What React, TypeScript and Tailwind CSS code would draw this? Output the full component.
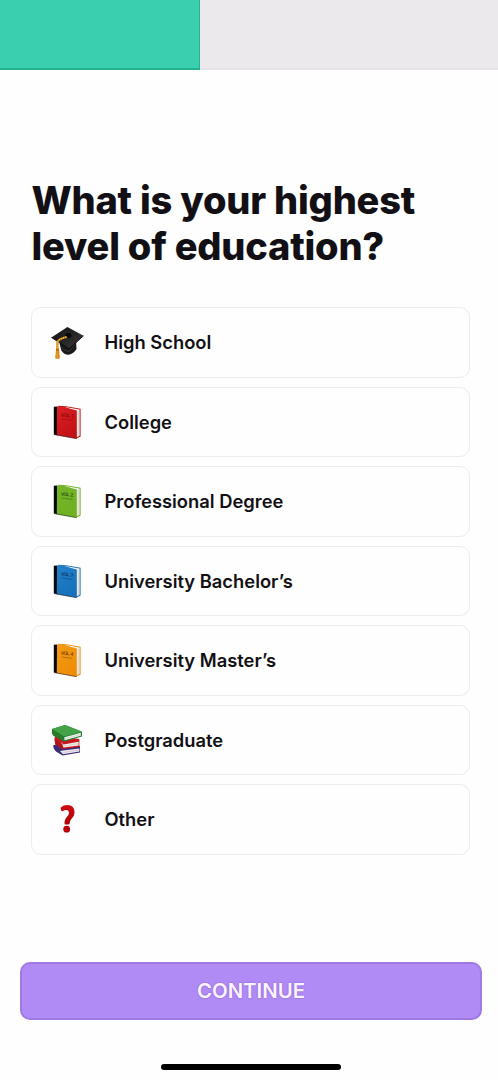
import type { ReactNode } from 'react';

type BookProps = {
  id: string;
  volume: number;
  light: string;
  dark: string;
  ink: string;
};

function Book({ id, volume, light, dark, ink }: BookProps) {
  return (
    <svg viewBox="0 0 40 40" className="h-10 w-10">
      <defs>
        <linearGradient id={id} x1="0" y1="0" x2="0.6" y2="1">
          <stop offset="0" stopColor={light} />
          <stop offset="1" stopColor={dark} />
        </linearGradient>
      </defs>
      <path d="M11 3.8 L19 4.2 L33.6 6.8 V34.4 L29 36.8 L27 20 Z" fill={dark} />
      <path d="M17 4.8 L32.6 7.4 V33.8 L29.4 35.5 L28 8.8 Z" fill="#f3f0e9" />
      <path d="M31.2 9 V34" stroke="#b9b6ae" strokeWidth="0.5" />
      <path d="M6.8 4.8 L10.5 4.4 V33.2 L6.8 32.5 Z" fill="#080808" />
      <path d="M10 4.4 L13 4.3 L29.8 8.4 V36.8 L9.8 33.2 Z" fill={`url(#${id})`} />
      <path d="M7 32.5 L29.5 36.7" stroke="#222" strokeWidth="0.6" />
      <text
        x="13.8"
        y="14.5"
        transform="rotate(6 14 14)"
        fontFamily="Inter, sans-serif"
        fontSize="4.6"
        fontWeight="600"
        textLength="12.5"
        fill={ink}
      >
        VOL. {volume}
      </text>
      <path d="M14.5 17 L25.5 18.4" stroke={ink} strokeWidth="0.8" opacity="0.5" />
    </svg>
  );
}

function GraduationCap() {
  return (
    <svg viewBox="0 0 40 40" className="h-10 w-10">
      <defs>
        <linearGradient id="cap-top" x1="0" y1="0" x2="1" y2="1">
          <stop offset="0" stopColor="#111" />
          <stop offset="1" stopColor="#3a3a3a" />
        </linearGradient>
      </defs>
      <path d="M12.5 21 L14.3 28.4 Q17 32.5 21.5 32.7 Q27 31.5 29.5 27 L29 18 Z" fill="#191919" />
      <path d="M14 24.5 Q16 29 22 29.5 L29.5 20" fill="none" stroke="#444" strokeWidth="0.7" />
      <path d="M4.4 15.4 L20.4 5 L36.5 13.8 L22 26.8 Z" fill="url(#cap-top)" />
      <path d="M4.4 15.4 L22 26.8 L36.5 13.8" fill="none" stroke="#080808" strokeWidth="0.9" />
      <ellipse cx="21.3" cy="13.5" rx="3.1" ry="2.4" fill="#080808" />
      <path d="M19.5 15 Q11 17 10.4 20.5 V27" fill="none" stroke="#c78112" strokeWidth="2.2" />
      <path d="M19.5 15 Q11 17 10.4 20.5 V27" fill="none" stroke="#ffc94a" strokeWidth="1.3" strokeDasharray="1 1.2" />
      <path d="M9.2 25.8 H11.9 L12.9 36.2 Q10.5 37.5 8.2 36.2 Z" fill="#d98613" />
      <path d="M10.3 29 L10 36" stroke="#f4b348" strokeWidth="0.7" />
      <path d="M8.9 28 H12" stroke="#874908" strokeWidth="0.7" />
    </svg>
  );
}

function BookStack() {
  return (
    <svg viewBox="0 0 40 40" className="h-10 w-10">
      <path d="M6.5 25 Q5.5 28 9 31.4 L15.5 35.6 L33 32.4 V26 L20 23 Z" fill="#3e2b75" />
      <path d="M13 31 L16 34.2 L32.4 31.4 V28.4 L16 30.6 Z" fill="#eeeaf2" />
      <path d="M16 32.6 L32.2 30" stroke="#aaa5b4" strokeWidth="0.5" />
      <path d="M8 15.5 Q6.5 20 8.5 24.4 L15 29 L32.3 27 V19 Z" fill="#c61920" />
      <path d="M14 22 L16.5 24.6 L31.6 21.8 V25.4 L16.5 27.4 Z" fill="#f5f0ed" />
      <path d="M16.5 26 L31.5 23.6" stroke="#b7b0ac" strokeWidth="0.5" />
      <path d="M8 19.5 L15.5 24.6 V29 L8.5 24.4 Z" fill="#b1131b" />
      <path d="M5 9 L18 5 L35 11.8 V16.4 L17 21.4 L6 15.2 Z" fill="#258332" />
      <path d="M17.4 17.2 L33.8 12.8 V15.8 L17.6 20.2 Z" fill="#f1f4ec" />
      <path d="M17.6 18.7 L33.8 14.3" stroke="#b5bfae" strokeWidth="0.5" />
      <path d="M5 9 L18 5 L35 11.4 L17 16.4 Z" fill="#44a347" />
      <path d="M5 9 Q4.2 13 6.2 15.4 L17 21.4 V16.4 Z" fill="#287b2d" />
    </svg>
  );
}

function QuestionMark() {
  return (
    <svg viewBox="0 0 40 40" className="h-10 w-10">
      <defs>
        <linearGradient id="question" x1="0" y1="0" x2="0" y2="1">
          <stop offset="0" stopColor="#d40b10" />
          <stop offset="1" stopColor="#aa0006" />
        </linearGradient>
      </defs>
      <path
        d="M13.8 8.4 Q16.4 6.1 20.4 6.1 Q27.6 6.5 27.6 13.4 Q27.4 17.4 24.2 20.2 Q22.6 21.8 22.4 25.2 Q20 26 17.6 25.2 Q17.1 20.8 19.9 17.9 Q22.2 15.4 22 13.2 Q21.6 10.9 19.2 11 Q17.4 11.1 15.6 12.3 Q13.4 12 13.8 8.4 Z"
        fill="url(#question)"
      />
      <circle cx="19.7" cy="30.2" r="3.4" fill="#b80006" />
    </svg>
  );
}

const options: { label: string; icon: ReactNode }[] = [
  { label: 'High School', icon: <GraduationCap /> },
  { label: 'College', icon: <Book id="book-red" volume={1} light="#dc2025" dark="#c11116" ink="#79090d" /> },
  { label: 'Professional Degree', icon: <Book id="book-green" volume={2} light="#76b52b" dark="#6fb021" ink="#294d09" /> },
  { label: 'University Bachelor’s', icon: <Book id="book-blue" volume={3} light="#2581cb" dark="#1670ba" ink="#07365e" /> },
  { label: 'University Master’s', icon: <Book id="book-orange" volume={4} light="#f49a16" dark="#ee8d05" ink="#713b00" /> },
  { label: 'Postgraduate', icon: <BookStack /> },
  { label: 'Other', icon: <QuestionMark /> },
];

export default function App() {
  return (
    <main className="flex h-[1080px] w-[498px] flex-col overflow-hidden bg-[#fefefe] font-['Inter',sans-serif] text-[#121014]">
      <div className="flex h-[70px] shrink-0 border-b-2 border-[#e5e3e6] bg-[#ebe9ec]">
        <div className="-mb-0.5 h-[70px] w-[200.4px] border-r border-b-2 border-[#24b38f] bg-[#3acfae]" />
      </div>

      <h1 className="mt-[107px] ml-[31.5px] h-[92px] text-[38px] leading-[46px] font-extrabold tracking-[-0.2px] whitespace-nowrap">
        What is your highest
        <br />
        level of education?
      </h1>

      <div className="mt-[38px] mr-[28px] ml-[31px] flex flex-col gap-[9px]">
        {options.map((option) => (
          <button
            key={option.label}
            className="flex h-[70.5px] items-center rounded-[10px] border border-[#ececee] pl-[15px] text-left text-[18.35px] font-semibold"
          >
            {option.icon}
            <span className="ml-[17.5px] pt-[1.5px]">{option.label}</span>
          </button>
        ))}
      </div>

      <button className="mt-[107px] mr-4 ml-5 h-[58px] shrink-0 rounded-[10px] border-2 border-[#9f79e3] bg-[#b18bf5] pt-px text-[20.4px] font-semibold text-[#fbf3ff] [text-shadow:0_0_2px_#8257c4]">
        CONTINUE
      </button>

      <div className="mt-11 ml-[161px] h-1.5 w-[180px] shrink-0 rounded-full bg-black" />
    </main>
  );
}
